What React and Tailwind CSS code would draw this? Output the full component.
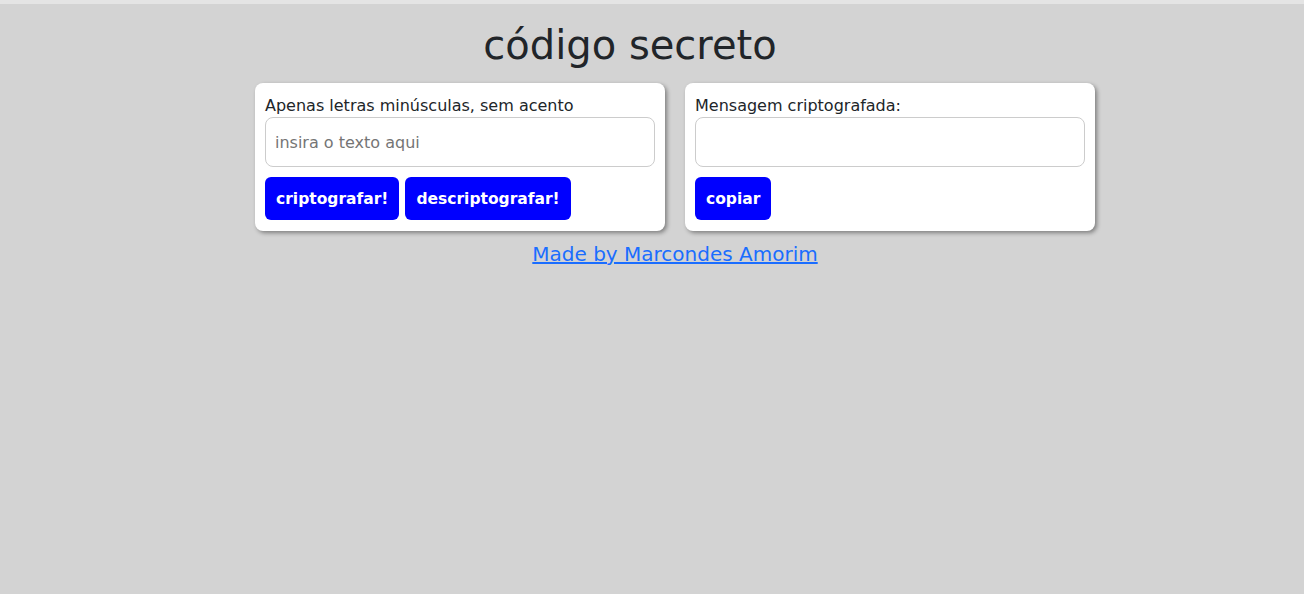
import React, { useState } from 'react';

const font = { fontFamily: '"DejaVu Sans", Verdana, sans-serif' };

const Button = ({ children, onClick }) => (
    <button
        onClick={onClick}
        className="h-[43px] px-[11px] pt-[3px] rounded-[6px] bg-[#0000ff] text-white text-[15.5px] font-bold cursor-pointer"
    >
        {children}
    </button>
);

const App = () => {
    const [texto, setTexto] = useState('');
    const [resultado, setResultado] = useState('');

    return (
        <div className="min-h-[594px] bg-[#d3d3d3] text-[#212529] font-['DejaVu_Sans',Verdana,sans-serif]">
            <div className="h-[4px] bg-[#e4e4e4]"></div>

            <div className="flex justify-center pr-[44px] mt-[17px]">
                <h1 className="text-[40px] leading-[48px]">código secreto</h1>
            </div>

            <div className="flex justify-center gap-[20px] pl-[46px] mt-[14px]">
                <div className="w-[410px] bg-white rounded-[8px] px-[10px] pt-[10px] pb-[11px] shadow-[2px_2px_4px_rgba(0,0,0,0.4)]">
                    <p className="text-[16px] leading-[24px] pt-[1px] -mb-[1px]">Apenas letras minúsculas, sem acento</p>
                    <input
                        type="text"
                        value={texto}
                        onChange={(e) => setTexto(e.target.value)}
                        placeholder="insira o texto aqui"
                        className="w-full h-[50px] px-[9px] pt-[1px] border border-[#cccccc] rounded-[8px] text-[16px] placeholder:text-[#757575] focus:outline-none"
                    />
                    <div className="flex gap-[6px] mt-[10px]">
                        <Button>criptografar!</Button>
                        <Button>descriptografar!</Button>
                    </div>
                </div>

                <div className="w-[410px] bg-white rounded-[8px] px-[10px] pt-[10px] pb-[11px] shadow-[2px_2px_4px_rgba(0,0,0,0.4)]">
                    <p className="text-[16px] leading-[24px] pt-[1px] -mb-[1px]">Mensagem criptografada:</p>
                    <input
                        type="text"
                        value={resultado}
                        readOnly
                        className="w-full h-[50px] px-[9px] border border-[#cccccc] rounded-[8px] text-[16px] focus:outline-none"
                    />
                    <div className="flex gap-[6px] mt-[10px]">
                        <Button onClick={() => setResultado(texto)}>copiar</Button>
                    </div>
                </div>
            </div>

            <div className="flex justify-center pl-[46px] mt-[8px]">
                <a href="#" className="text-[20px] text-[#1a6dff] underline" style={font}>
                    Made by Marcondes Amorim
                </a>
            </div>
        </div>
    );
};

export default App;
